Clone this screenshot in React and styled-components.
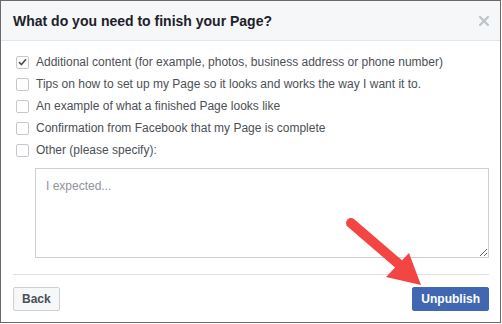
import React from 'react';
import styled, { createGlobalStyle } from 'styled-components';

const GlobalStyle = createGlobalStyle`
  html, body {
    margin: 0;
    padding: 0;
    background: #fff;
  }
  body {
    font-family: 'Liberation Sans', Arial, Helvetica, sans-serif;
  }
`;

const options = [
  { label: 'Additional content (for example, photos, business address or phone number)', checked: true },
  { label: 'Tips on how to set up my Page so it looks and works the way I want it to.' },
  { label: 'An example of what a finished Page looks like' },
  { label: 'Confirmation from Facebook that my Page is complete' },
  { label: 'Other (please specify):' },
];

const App = () => {
  return (
    <>
      <GlobalStyle />
      <StDialog>
        <StHeader>
          <StTitle>What do you need to finish your Page?</StTitle>
          <StClose aria-label="Close">
            <svg width="10" height="10" viewBox="0 0 10 10">
              <path d="M1 1L9 9M9 1L1 9" stroke="#bec2c9" strokeWidth="2.2" strokeLinecap="square" />
            </svg>
          </StClose>
        </StHeader>
        <StBody>
          <StList>
            {options.map((option, index) => (
              <StOption key={index}>
                <StCheckbox>
                  {option.checked && (
                    <svg width="9" height="8" viewBox="0 0 9 8">
                      <path d="M1 4.2L3.4 6.5L8 1.2" fill="none" stroke="#4b4f56" strokeWidth="1.6" />
                    </svg>
                  )}
                </StCheckbox>
                <StLabel>{option.label}</StLabel>
              </StOption>
            ))}
          </StList>
          <StTextarea placeholder="I expected..." />
          <StDivider />
          <StFooter>
            <StButton>Back</StButton>
            <StButton primary>Unpublish</StButton>
          </StFooter>
        </StBody>
        <StArrow width="110" height="80" viewBox="0 0 110 80">
          <path d="M8 7L58 50" stroke="#f44545" strokeWidth="10" strokeLinecap="round" />
          <polygon points="43,61 66,37 78,69" fill="#f44545" />
        </StArrow>
      </StDialog>
    </>
  );
};
export default App;

const StDialog = styled.div`
  position: relative;
  box-sizing: border-box;
  width: 501px;
  height: 323px;
  border: 1px solid #6a6a6a;
  background: #fff;
`;

const StHeader = styled.div`
  display: flex;
  align-items: center;
  justify-content: space-between;
  box-sizing: border-box;
  height: 40px;
  padding: 0 11px 0 12px;
  background: #f6f7f9;
  border-bottom: 1px solid #e5e5e5;
`;

const StTitle = styled.h2`
  margin: 0;
  font-size: 14px;
  font-weight: bold;
  color: #1d2129;
`;

const StClose = styled.span`
  display: flex;
  align-items: center;
  width: 10px;
  height: 10px;
`;

const StBody = styled.div`
  padding: 10px 11px 0 12px;
`;

const StList = styled.ul`
  margin: 0;
  padding: 0;
  list-style: none;
`;

const StOption = styled.li`
  display: flex;
  align-items: center;
  height: 22px;
  padding-left: 3px;
  gap: 7px;
`;

const StCheckbox = styled.span`
  display: flex;
  align-items: center;
  justify-content: center;
  box-sizing: border-box;
  width: 13px;
  height: 13px;
  border: 1px solid #c4c7cc;
  border-radius: 2px;
  background: #fff;
`;

const StLabel = styled.span`
  font-size: 12px;
  color: #4b4f56;
`;

const StTextarea = styled.textarea`
  display: block;
  box-sizing: border-box;
  width: 454px;
  height: 90px;
  margin: 7px 0 0 22px;
  padding: 10px;
  border: 1px solid #ccd0d5;
  border-radius: 0;
  font-family: 'Liberation Sans', Arial, sans-serif;
  font-size: 12px;
  color: #1d2129;
  resize: both;
  &::placeholder {
    color: #90949c;
  }
`;

const StDivider = styled.hr`
  margin: 16px 0 12px;
  border: 0;
  border-top: 1px solid #dddfe2;
`;

const StFooter = styled.div`
  display: flex;
  justify-content: space-between;
`;

const StButton = styled.button`
  box-sizing: border-box;
  height: 24px;
  padding: 0 ${(props) => (props.primary ? '8px' : '8px')};
  border: 1px solid ${(props) => (props.primary ? '#4267b2' : '#ced0d4')};
  border-radius: 2px;
  background: ${(props) => (props.primary ? '#4267b2' : '#f6f7f9')};
  color: ${(props) => (props.primary ? '#fff' : '#4b4f56')};
  font-family: 'Liberation Sans', Arial, sans-serif;
  font-size: 12px;
  font-weight: bold;
`;

const StArrow = styled.svg`
  position: absolute;
  left: 342px;
  top: 215px;
  overflow: visible;
`;
